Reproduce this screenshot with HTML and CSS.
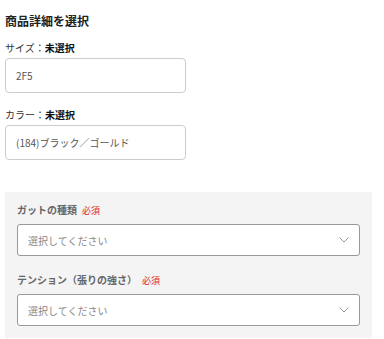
FILE: index.html
```html
<!DOCTYPE html>
<html>
<head>
    <title>商品詳細を選択</title>
    <link rel="stylesheet" href="styles.css">
</head>
<body>
    <div class="container">
        <h2 class="title">商品詳細を選択</h2>

        <div class="field">
            <div class="label">サイズ：<b>未選択</b></div>
            <div class="box">2F5</div>
        </div>

        <div class="field">
            <div class="label">カラー：<b>未選択</b></div>
            <div class="box">(184)ブラック／ゴールド</div>
        </div>

        <div class="options">
            <div class="option">
                <div class="opt-label">ガットの種類<span class="req">必須</span></div>
                <div class="select">
                    <span>選択してください</span>
                    <svg width="10" height="6" viewBox="0 0 10 6"><path d="M0.5 0.5 L5 5 L9.5 0.5" fill="none" stroke="#999" stroke-width="1"/></svg>
                </div>
            </div>
            <div class="option">
                <div class="opt-label">テンション（張りの強さ）<span class="req">必須</span></div>
                <div class="select">
                    <span>選択してください</span>
                    <svg width="10" height="6" viewBox="0 0 10 6"><path d="M0.5 0.5 L5 5 L9.5 0.5" fill="none" stroke="#999" stroke-width="1"/></svg>
                </div>
            </div>
        </div>
    </div>
</body>
</html>
```

FILE: styles.css
```css
body {
    margin: 0;
    font-family: "Noto Sans CJK JP", "Noto Sans", sans-serif;
    color: #222;
    background: #fff;
}
.container {
    padding: 0 12px 0 5px;
}
.title {
    font-size: 12px;
    font-weight: bold;
    margin: 0;
    padding-top: 11px;
    line-height: 20px;
}
.field {
    margin-top: 10px;
}
.label {
    font-size: 10px;
    line-height: 14px;
    color: #333;
}
.label b {
    font-weight: bold;
    color: #111;
}
.box {
    width: 181px;
    height: 35px;
    box-sizing: border-box;
    margin-top: 3px;
    border: 1px solid #ccc;
    border-radius: 4px;
    padding: 0 10px;
    display: flex;
    align-items: center;
    font-size: 10px;
    color: #555;
}
.field + .field {
    margin-top: 15px;
}
.options {
    margin-top: 32px;
    background: #f4f4f4;
    padding: 11px 12px 12px 12px;
}
.option + .option {
    margin-top: 17px;
}
.opt-label {
    font-size: 10px;
    font-weight: bold;
    color: #666;
    line-height: 14px;
}
.req {
    color: #e0242d;
    font-weight: normal;
    font-size: 9px;
    margin-left: 5px;
}
.select {
    margin-top: 6px;
    height: 32px;
    box-sizing: border-box;
    background: #fff;
    border: 1.5px solid #999;
    border-radius: 3px;
    display: flex;
    align-items: center;
    justify-content: space-between;
    padding: 0 10px 0 10px;
    font-size: 10px;
    color: #888;
}
```
